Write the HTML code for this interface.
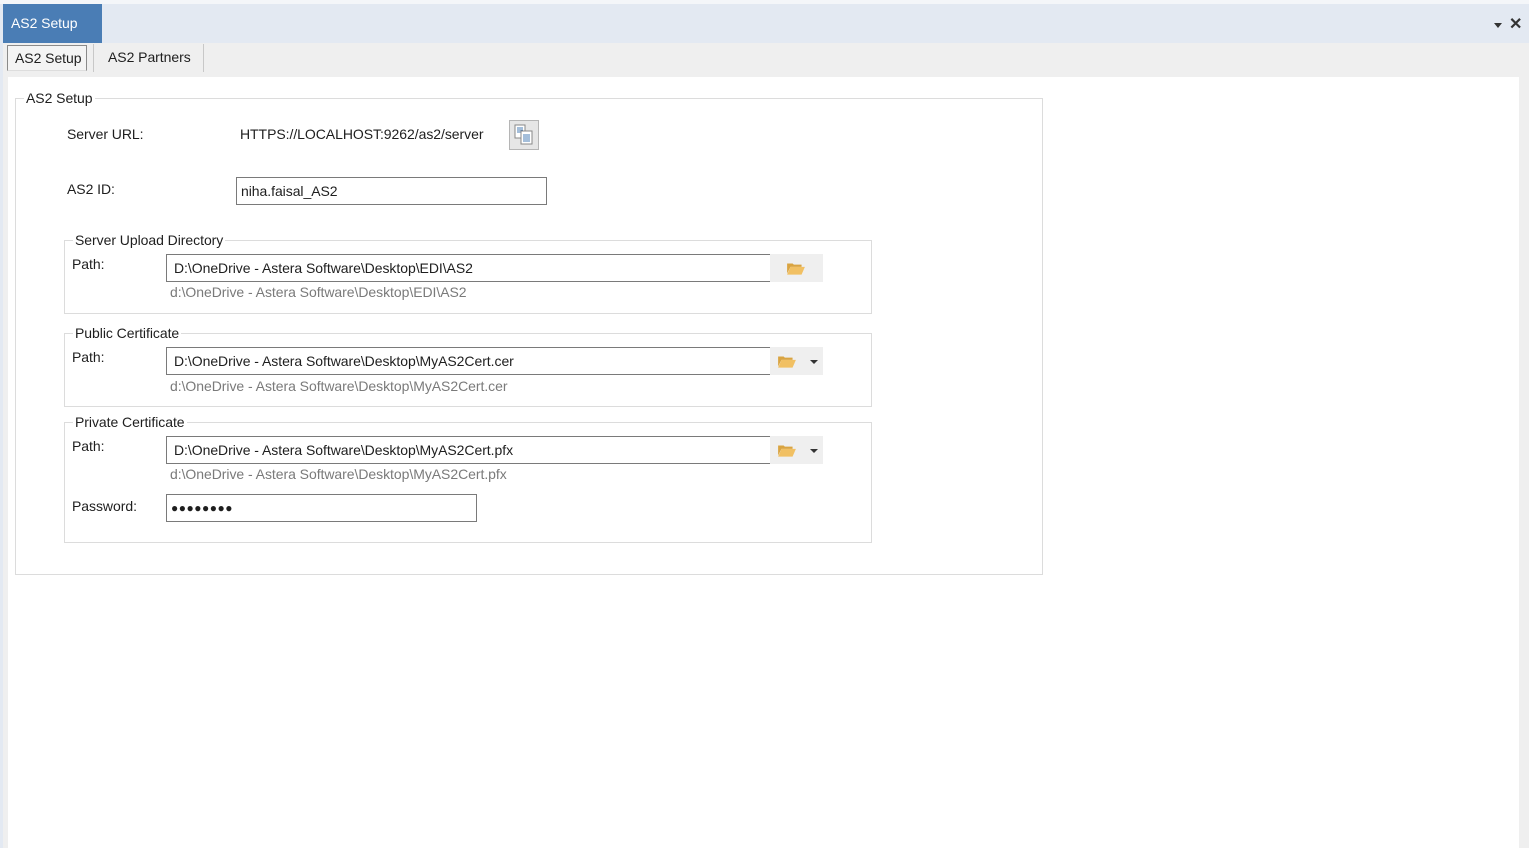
<!DOCTYPE html>
<html><head><meta charset="utf-8"><style>
*{margin:0;padding:0;box-sizing:border-box}
body{width:1529px;height:848px;background:#fff;position:relative;overflow:hidden;font-family:"Liberation Sans",sans-serif;font-size:14px;color:#1e1e1e;letter-spacing:-0.05px}
.a{position:absolute;white-space:nowrap}
.gb{position:absolute;border:1px solid #dcdcdc}
.gl{position:absolute;background:#fff;padding:0 2px;line-height:16px}
.in{position:absolute;border:1px solid #7a7a7a;background:#fff;height:28px;line-height:26px;padding-left:7px}
.btn{position:absolute;background:#efefef;height:28px}
.fold{position:absolute;width:20px;height:14px}
.grey{color:#7a7a7a}
.dd{position:absolute;width:0;height:0;border-left:4px solid transparent;border-right:4px solid transparent;border-top:4px solid #333}
</style></head><body>
<div class="a" style="left:0;top:0;width:1529px;height:4px;background:#f4f6f9"></div>
<div class="a" style="left:0;top:4px;width:1529px;height:39px;background:#e3e9f2"></div>
<div class="a" style="left:3px;top:4px;width:99px;height:39px;background:#4a7db5;color:#fff;line-height:38px;padding-left:8px">AS2 Setup</div>
<div class="dd" style="left:1494px;top:23px;border-top-width:5px"></div>
<div class="a" style="left:1509px;top:14px;font-size:16px;font-weight:bold;color:#333">✕</div>
<div class="a" style="left:0;top:43px;width:1529px;height:805px;background:#efefef"></div>
<div class="a" style="left:0;top:43px;width:3px;height:805px;background:#e3e9f2"></div>
<div class="a" style="left:7px;top:45px;width:80px;height:26px;border:1px solid #8a8a8a;border-bottom-color:#ddd;background:#f4f4f4;line-height:24px;padding-left:7px">AS2 Setup</div>
<div class="a" style="left:93px;top:44px;width:1px;height:28px;background:#c8c8c8"></div>
<div class="a" style="left:108px;top:49px">AS2 Partners</div>
<div class="a" style="left:203px;top:44px;width:1px;height:28px;background:#c8c8c8"></div>
<div class="a" style="left:8px;top:77px;width:1511px;height:771px;background:#fff"></div>

<div class="gb" style="left:15px;top:98px;width:1028px;height:477px"></div>
<div class="gl" style="left:24px;top:90px">AS2 Setup</div>
<div class="a" style="left:67px;top:126px">Server URL:</div>
<div class="a" style="left:240px;top:126px">HTTPS://LOCALHOST:9262/as2/server</div>
<div class="a" style="left:509px;top:120px;width:30px;height:30px;border:1px solid #b5b5b5;background:#e6e6e6">
<svg width="28" height="28" viewBox="0 0 28 28"><rect x="5" y="4" width="10" height="13" fill="#fff" stroke="#888"/><path d="M7 7h6M7 9h6M7 11h4" stroke="#4a7db5"/><rect x="11" y="10" width="11" height="13" fill="#fff" stroke="#888"/><path d="M13 14h7M13 16h7M13 18h7M13 20h7" stroke="#4a7db5"/></svg></div>
<div class="a" style="left:67px;top:181px">AS2 ID:</div>
<div class="in" style="left:236px;top:177px;width:311px;padding-left:4px">niha.faisal_AS2</div>

<div class="gb" style="left:64px;top:240px;width:808px;height:74px"></div>
<div class="gl" style="left:73px;top:232px">Server Upload Directory</div>
<div class="a" style="left:72px;top:256px">Path:</div>
<div class="in" style="left:166px;top:254px;width:605px">D:\OneDrive - Astera Software\Desktop\EDI\AS2</div>
<div class="btn" style="left:770px;top:254px;width:53px"><svg class="fold" style="left:16px;top:7px" viewBox="0 0 18 12"><path d="M1 2h5l1 1h7v2H4L1 11z" fill="#d9a441"/><path d="M4 5h13l-3 7H1z" fill="#f1c063"/></svg></div>
<div class="a grey" style="left:170px;top:284px">d:\OneDrive - Astera Software\Desktop\EDI\AS2</div>

<div class="gb" style="left:64px;top:333px;width:808px;height:74px"></div>
<div class="gl" style="left:73px;top:325px">Public Certificate</div>
<div class="a" style="left:72px;top:349px">Path:</div>
<div class="in" style="left:166px;top:347px;width:605px">D:\OneDrive - Astera Software\Desktop\MyAS2Cert.cer</div>
<div class="btn" style="left:770px;top:347px;width:53px"><svg class="fold" style="left:7px;top:7px" viewBox="0 0 18 12"><path d="M1 2h5l1 1h7v2H4L1 11z" fill="#d9a441"/><path d="M4 5h13l-3 7H1z" fill="#f1c063"/></svg><div class="dd" style="left:40px;top:13px"></div></div>
<div class="a grey" style="left:170px;top:378px">d:\OneDrive - Astera Software\Desktop\MyAS2Cert.cer</div>

<div class="gb" style="left:64px;top:422px;width:808px;height:121px"></div>
<div class="gl" style="left:73px;top:414px">Private Certificate</div>
<div class="a" style="left:72px;top:438px">Path:</div>
<div class="in" style="left:166px;top:436px;width:605px">D:\OneDrive - Astera Software\Desktop\MyAS2Cert.pfx</div>
<div class="btn" style="left:770px;top:436px;width:53px"><svg class="fold" style="left:7px;top:7px" viewBox="0 0 18 12"><path d="M1 2h5l1 1h7v2H4L1 11z" fill="#d9a441"/><path d="M4 5h13l-3 7H1z" fill="#f1c063"/></svg><div class="dd" style="left:40px;top:13px"></div></div>
<div class="a grey" style="left:170px;top:466px">d:\OneDrive - Astera Software\Desktop\MyAS2Cert.pfx</div>
<div class="a" style="left:72px;top:498px">Password:</div>
<div class="in" style="left:166px;top:494px;width:311px;padding-left:4px;font-size:12px;letter-spacing:0.5px">●●●●●●●●</div>
</body></html>
